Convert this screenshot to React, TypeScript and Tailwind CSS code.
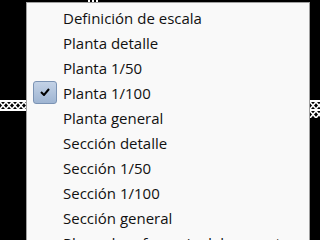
import React from "react";

const items = [
  "Definición de escala",
  "Planta detalle",
  "Planta 1/50",
  "Planta 1/100",
  "Planta general",
  "Sección detalle",
  "Sección 1/50",
  "Sección 1/100",
  "Sección general",
  "Plano de referencia del proyecto",
];

const checked = "Planta 1/100";

function Lattice({ h, id }: { h: number; id: string }) {
  return (
    <svg width="100%" height={h} className="block">
      <defs>
        <pattern id={id} width="6" height="9" patternUnits="userSpaceOnUse">
          <rect width="6" height="9" fill="#000" />
          <path d="M0 1 L3 4.5 L0 8 M6 1 L3 4.5 L6 8" stroke="#fff" strokeWidth="1.6" fill="none" />
          <rect x="0" y="0" width="6" height="1" fill="#fff" />
          <rect x="0" y="8" width="6" height="1" fill="#fff" />
        </pattern>
      </defs>
      <rect width="100%" height={h} fill={`url(#${id})`} />
    </svg>
  );
}

export default function App() {
  return (
    <div className="relative w-[320px] h-[240px] overflow-hidden bg-black font-['Open_Sans',sans-serif]">
      {/* ribbon behind the menu */}
      <div className="pt-[100px] flex items-start">
        <div className="flex-1">
          <div className="h-px bg-white" />
          <Lattice h={9} id="latl" />
          <div className="h-px bg-white" />
        </div>
        <div className="w-[22px]">
          <div className="h-px bg-white" />
          <Lattice h={17} id="latr" />
        </div>
      </div>

      {/* bit of ribbon peeking above the menu */}
      <div className="absolute left-[88px] top-0 w-[11px] h-[2px] bg-[repeating-linear-gradient(90deg,#fff_0_2px,#000_2px_4px)]" />

      {/* dropdown menu */}
      <div className="absolute left-[26px] top-[2px] w-[284px] h-[260px] border border-[#a0a0a0] bg-[#f9f9f9] pt-[3px]">
        {items.map((label) => (
          <div key={label} className="flex items-center h-[25px]">
            <div className="w-[36px] pl-[6px] flex items-center">
              {label === checked && (
                <div className="w-[24px] h-[23px] -mt-[3px] rounded-[3px] border border-[#7b93b4] bg-gradient-to-b from-[#c3d2e6] to-[#9fb5d2] flex items-center justify-center">
                  <svg width="10" height="8" viewBox="0 0 10 8">
                    <path d="M1 4 L4 7 L9 1" stroke="#000" strokeWidth="2" fill="none" />
                  </svg>
                </div>
              )}
            </div>
            <span className="text-[15px] text-[#111] leading-none whitespace-nowrap">{label}</span>
          </div>
        ))}
      </div>
    </div>
  );
}
